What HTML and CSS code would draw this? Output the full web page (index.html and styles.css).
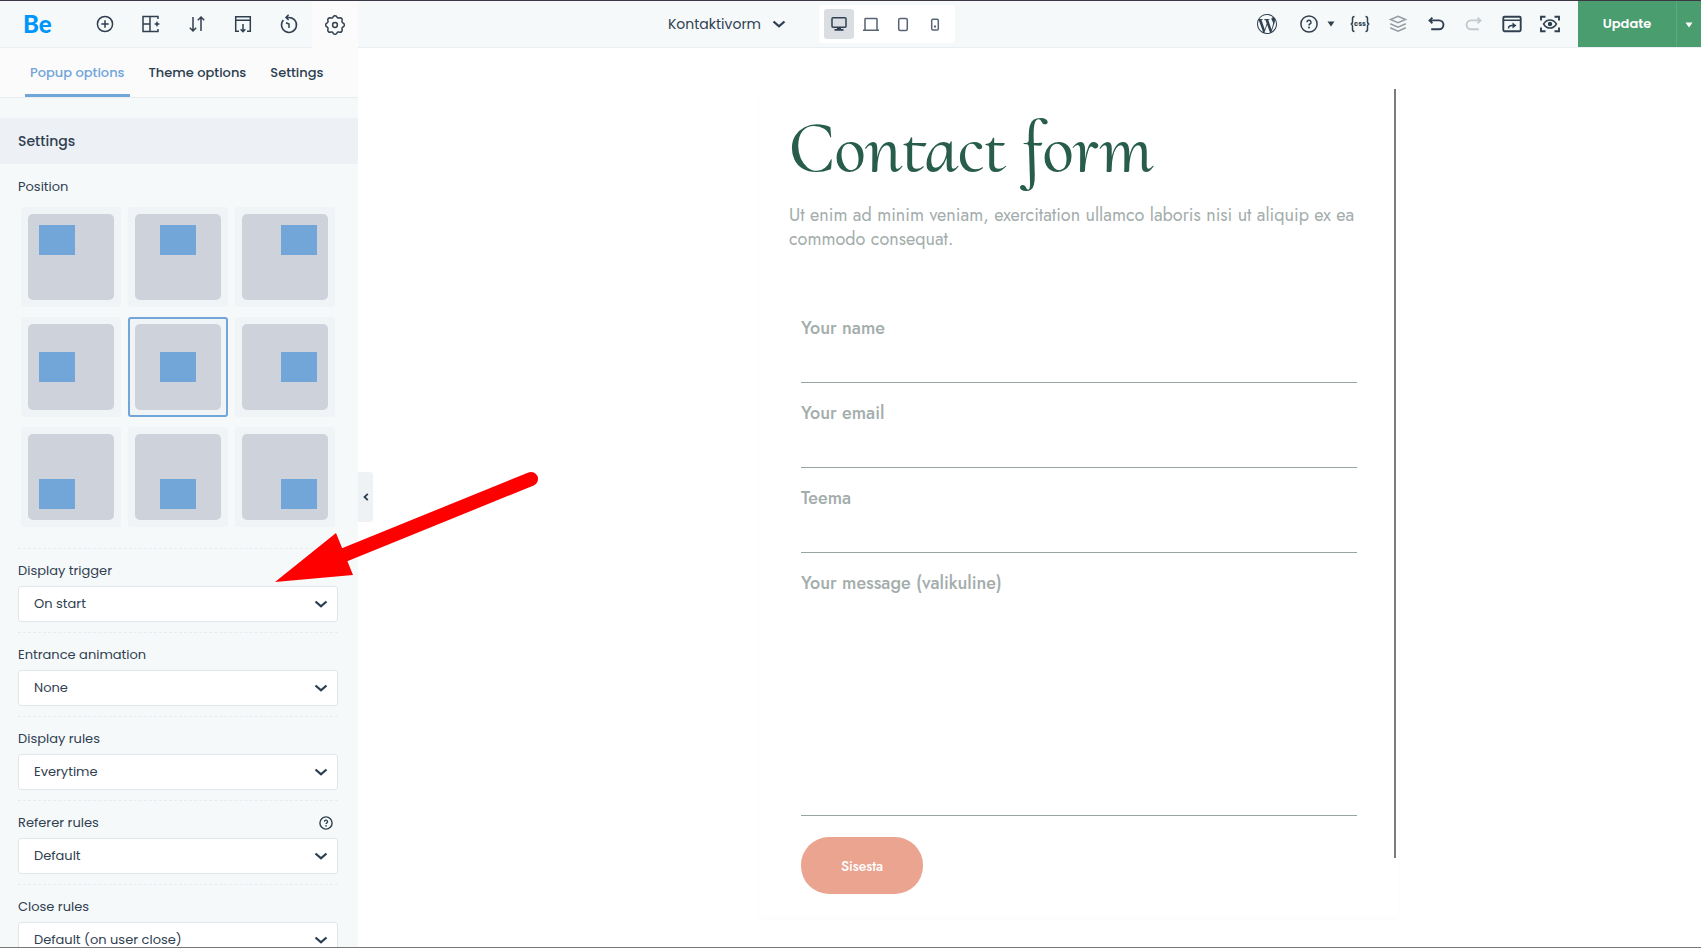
FILE: index.html
```html
<!DOCTYPE html>
<html lang="et">
<head>
    <meta charset="UTF-8">
    <meta name="viewport" content="width=device-width, initial-scale=1.0">
    <title>Kontaktivorm</title>
    <link rel="stylesheet" href="styles.css">
</head>
<body>
    <header class="topbar">
        <div class="topbar-left">
            <a class="logo" href="#">Be</a>
            <button class="tool" type="button" aria-label="Add element">
                <svg class="icon" viewBox="0 0 20 20"><circle cx="10" cy="10" r="7.6"/><path d="M10 6.3v7.4M6.3 10h7.4"/></svg>
            </button>
            <button class="tool" type="button" aria-label="Pre-built sections">
                <svg class="icon" viewBox="0 0 20 20"><path d="M17 5V2.5H2v15h15V15M9 2.5v15M2 10h7"/><path class="solid" d="M16 6.8l.9 2.3 2.3.9-2.3.9-.9 2.3-.9-2.3-2.3-.9 2.3-.9z"/></svg>
            </button>
            <button class="tool" type="button" aria-label="Import and export">
                <svg class="icon" viewBox="0 0 20 20"><path d="M6 3v14M2.8 13.8 6 17l3.200-3.200M14 17V3M10.800 6.200 14 3l3.200 3.200"/></svg>
            </button>
            <button class="tool" type="button" aria-label="Single page import">
                <svg class="icon" viewBox="0 0 20 20"><path d="M6 17.300H2.700V2.700h14.600v14.600H14M2.700 6.300h14.600M10 10v7.500M7.600 15.300 10 17.700l2.400-2.400"/></svg>
            </button>
            <button class="tool" type="button" aria-label="History">
                <svg class="icon" viewBox="0 0 20 20"><path d="M4.400 5.900A7.500 7.500 0 1 0 10 3.400H7.200M9.600 .8 7 3.400 9.600 6M7 8.800l3 1.200v4"/></svg>
            </button>
            <button class="tool tool-active" type="button" aria-label="Settings">
                <svg class="icon" viewBox="0 0 20 20"><circle cx="10" cy="10" r="2.400"/><path d="M18.410 8.210a2.200 2.200 0 0 1 0 3.580a1.900 1.900 0 0 0-1.200 2.890a2.200 2.200 0 0 1-2.530 2.530a1.900 1.900 0 0 0-2.890 1.200a2.200 2.200 0 0 1-3.580 0a1.900 1.900 0 0 0-2.890-1.200a2.200 2.200 0 0 1-2.530-2.530a1.900 1.900 0 0 0-1.200-2.890a2.200 2.200 0 0 1 0-3.580a1.900 1.900 0 0 0 1.200-2.890a2.200 2.200 0 0 1 2.530-2.530a1.900 1.900 0 0 0 2.890-1.200a2.200 2.200 0 0 1 3.580 0a1.900 1.900 0 0 0 2.890 1.200a2.200 2.200 0 0 1 2.530 2.530a1.900 1.900 0 0 0 1.200 2.890z"/></svg>
            </button>
        </div>

        <div class="topbar-center">
            <button class="page-name" type="button">
                Kontaktivorm
                <svg class="chevron" viewBox="0 0 14 8"><path d="M1.500 1.500 7 6.300l5.500-4.800"/></svg>
            </button>
            <div class="devices">
                <button class="device device-active" type="button" aria-label="Desktop">
                    <svg class="icon" viewBox="0 0 20 20"><rect x="3" y="3.800" width="14" height="9.400" rx="1"/><path class="solid" d="M8 13h4v2h2.500v1.800h-9V15H8z"/></svg>
                </button>
                <button class="device" type="button" aria-label="Laptop">
                    <svg class="icon" viewBox="0 0 20 20"><path d="M4 16V5.200q0-.7.7-.7h10.600q.7 0 .7.700V16M2 16.300h16"/></svg>
                </button>
                <button class="device" type="button" aria-label="Tablet">
                    <svg class="icon" viewBox="0 0 20 20"><rect x="5.700" y="4.500" width="8.600" height="12" rx="1.500"/></svg>
                </button>
                <button class="device" type="button" aria-label="Mobile">
                    <svg class="icon" viewBox="0 0 20 20"><rect x="6.700" y="5.200" width="6.600" height="10.800" rx="1.300"/><path class="solid" d="M9 11.500h2v2H9z"/></svg>
                </button>
            </div>
        </div>

        <div class="topbar-right">
            <button class="action" type="button" aria-label="WordPress">
                <svg class="icon" viewBox="0 0 24 24"><path class="solid" d="M21.469 6.825c.84 1.537 1.318 3.300 1.318 5.175 0 3.979-2.156 7.456-5.363 9.325l3.295-9.527c.615-1.540.820-2.771.820-3.864 0-.405-.026-.780-.070-1.110m-7.981.105c.647-.030 1.232-.105 1.232-.105.582-.075.514-.930-.067-.899 0 0-1.755.135-2.880.135-1.064 0-2.850-.150-2.850-.150-.585-.030-.661.855-.075.885 0 0 .540.061 1.125.090l1.680 4.605-2.370 7.080L5.354 6.900c.649-.030 1.234-.100 1.234-.100.585-.075.516-.930-.065-.896 0 0-1.746.138-2.874.138-.200 0-.438-.008-.690-.015C4.911 3.150 8.235 1.215 12 1.215c2.809 0 5.365 1.072 7.286 2.833-.046-.003-.091-.009-.141-.009-1.060 0-1.812.923-1.812 1.914 0 .890.513 1.643 1.060 2.531.411.720.890 1.643.890 2.977 0 .915-.354 1.994-.821 3.479l-1.075 3.585-3.900-11.610.001.014zM12 22.784c-1.059 0-2.081-.153-3.048-.437l3.237-9.406 3.315 9.087c.024.053.050.101.078.149-1.120.393-2.325.609-3.582.609M1.211 12c0-1.564.336-3.050.935-4.390L7.290 21.709C3.694 19.960 1.212 16.271 1.211 12M12 0C5.385 0 0 5.385 0 12s5.385 12 12 12 12-5.385 12-12S18.615 0 12 0"/></svg>
            </button>
            <button class="action action-help" type="button" aria-label="Help">
                <svg class="icon" viewBox="0 0 20 20"><circle cx="10" cy="10" r="8.100"/><path d="M8 8.200a2 2 0 1 1 2.900 1.800q-.9.400-.9 1.400"/><circle class="solid" cx="10" cy="13.600" r="1"/></svg>
                <svg class="caret" viewBox="0 0 8 6"><path d="M.5.500h7L4 5.500z"/></svg>
            </button>
            <button class="action" type="button" aria-label="Custom CSS">
                <svg class="icon" viewBox="0 0 20 20"><path d="M4.500 2.500q-2 0-2 2v3.300Q2.500 10 .7 10q1.800 0 1.800 2.200v3.300q0 2 2 2M15.500 2.500q2 0 2 2v3.300q0 2.200 1.800 2.200-1.800 0-1.800 2.200v3.300q0 2-2 2"/><text class="icon-text" x="10" y="12" text-anchor="middle">css</text></svg>
            </button>
            <button class="action action-soft" type="button" aria-label="Layers">
                <svg class="icon" viewBox="0 0 20 20"><path d="M10 2.200 17.500 5.500 10 8.800 2.500 5.500zM2.200 9.700 10 13.200l7.800-3.500M2.200 13.700 10 17.200l7.800-3.500"/></svg>
            </button>
            <button class="action" type="button" aria-label="Undo">
                <svg class="icon" viewBox="0 0 20 20"><path class="bold" d="M3.500 6.400H13a4.400 4.400 0 0 1 0 8.900H5.200M6.400 3.600 3.500 6.400l2.900 2.800"/></svg>
            </button>
            <button class="action action-disabled" type="button" aria-label="Redo">
                <svg class="icon" viewBox="0 0 20 20"><path class="bold" d="M16.500 6.400H7a4.400 4.400 0 0 0 0 8.900h7.800M13.600 3.600l2.900 2.800-2.900 2.800"/></svg>
            </button>
            <button class="action" type="button" aria-label="Open in new window">
                <svg class="icon" viewBox="0 0 20 20"><rect class="bold" x="1.300" y="2.700" width="17.400" height="14.600" rx="1.200"/><path d="M1.500 6.200h17M6.500 14.500q0-3 3.500-3h1"/><path class="solid" d="M10.500 8.500l4 3-4 3z"/></svg>
            </button>
            <button class="action" type="button" aria-label="Preview">
                <svg class="icon" viewBox="0 0 20 20"><path class="bold" d="M1 6.500V2.800h4.500M14.500 2.800H19v3.700M19 13.500v3.700h-4.500M5.500 17.200H1v-3.700"/><path d="M3.600 10Q6 5.900 10 5.900t6.400 4.100Q14 14.100 10 14.100T3.600 10z"/><circle class="solid" cx="10" cy="10" r="2.200"/></svg>
            </button>
            <button class="update" type="button">Update</button>
            <button class="update-more" type="button" aria-label="More update options">
                <svg class="caret" viewBox="0 0 8 6"><path d="M.5.500h7L4 5.500z"/></svg>
            </button>
        </div>
    </header>

    <main class="workspace">
        <aside class="sidebar">
            <nav class="tabs">
                <a class="tab tab-active" href="#popup">Popup options</a>
                <a class="tab" href="#theme">Theme options</a>
                <a class="tab" href="#settings">Settings</a>
            </nav>
            <h2 class="section-title">Settings</h2>

            <fieldset class="position">
                <legend class="position-title">Position</legend>
                <div class="position-grid">
                    <label class="tile top left"><input type="radio" name="position" aria-label="Top left"><span class="tile-screen"><span class="tile-popup"></span></span></label>
                    <label class="tile top"><input type="radio" name="position" aria-label="Top center"><span class="tile-screen"><span class="tile-popup"></span></span></label>
                    <label class="tile top right"><input type="radio" name="position" aria-label="Top right"><span class="tile-screen"><span class="tile-popup"></span></span></label>
                    <label class="tile left"><input type="radio" name="position" aria-label="Center left"><span class="tile-screen"><span class="tile-popup"></span></span></label>
                    <label class="tile"><input type="radio" name="position" aria-label="Center" checked><span class="tile-screen"><span class="tile-popup"></span></span></label>
                    <label class="tile right"><input type="radio" name="position" aria-label="Center right"><span class="tile-screen"><span class="tile-popup"></span></span></label>
                    <label class="tile bottom left"><input type="radio" name="position" aria-label="Bottom left"><span class="tile-screen"><span class="tile-popup"></span></span></label>
                    <label class="tile bottom"><input type="radio" name="position" aria-label="Bottom center"><span class="tile-screen"><span class="tile-popup"></span></span></label>
                    <label class="tile bottom right"><input type="radio" name="position" aria-label="Bottom right"><span class="tile-screen"><span class="tile-popup"></span></span></label>
                </div>
            </fieldset>

            <div class="option">
                <div class="option-head"><label for="trigger">Display trigger</label></div>
                <div class="select-box">
                    <select id="trigger"><option>On start</option></select>
                    <svg class="chevron" viewBox="0 0 14 8"><path d="M1.500 1.500 7 6.300l5.500-4.800"/></svg>
                </div>
            </div>
            <div class="option">
                <div class="option-head"><label for="animation">Entrance animation</label></div>
                <div class="select-box">
                    <select id="animation"><option>None</option></select>
                    <svg class="chevron" viewBox="0 0 14 8"><path d="M1.500 1.500 7 6.300l5.500-4.800"/></svg>
                </div>
            </div>
            <div class="option">
                <div class="option-head"><label for="rules">Display rules</label></div>
                <div class="select-box">
                    <select id="rules"><option>Everytime</option></select>
                    <svg class="chevron" viewBox="0 0 14 8"><path d="M1.500 1.500 7 6.300l5.500-4.800"/></svg>
                </div>
            </div>
            <div class="option">
                <div class="option-head">
                    <label for="referer">Referer rules</label>
                    <button class="hint" type="button" aria-label="About referer rules">
                        <svg class="icon" viewBox="0 0 20 20"><circle cx="10" cy="10" r="8.700"/><path d="M7.800 8.200a2.200 2.200 0 1 1 3.200 1.900q-1 .4-1 1.400"/><circle class="solid" cx="10" cy="14" r="1.200"/></svg>
                    </button>
                </div>
                <div class="select-box">
                    <select id="referer"><option>Default</option></select>
                    <svg class="chevron" viewBox="0 0 14 8"><path d="M1.500 1.500 7 6.300l5.500-4.800"/></svg>
                </div>
            </div>
            <div class="option">
                <div class="option-head"><label for="close">Close rules</label></div>
                <div class="select-box">
                    <select id="close"><option>Default (on user close)</option></select>
                    <svg class="chevron" viewBox="0 0 14 8"><path d="M1.500 1.500 7 6.300l5.500-4.800"/></svg>
                </div>
            </div>
        </aside>

        <section class="canvas">
            <button class="collapse" type="button" aria-label="Hide sidebar">
                <svg class="collapse-icon" viewBox="0 0 6 8"><path d="M4.800 .8 1.500 4l3.300 3.200"/></svg>
            </button>
            <div class="popup">
                <h1 class="popup-title">Contact form</h1>
                <p class="popup-text">Ut enim ad minim veniam, exercitation ullamco laboris nisi ut aliquip ex ea commodo consequat.</p>
                <form class="contact">
                    <div class="field">
                        <label for="name">Your name</label>
                        <input id="name" type="text">
                    </div>
                    <div class="field">
                        <label for="email">Your email</label>
                        <input id="email" type="email">
                    </div>
                    <div class="field">
                        <label for="subject">Teema</label>
                        <input id="subject" type="text">
                    </div>
                    <div class="field">
                        <label for="message">Your message (valikuline)</label>
                        <textarea id="message"></textarea>
                    </div>
                    <button class="submit" type="submit">Sisesta</button>
                </form>
                <div class="popup-scroll"></div>
            </div>
        </section>
    </main>

    <!-- Red arrow pointing at the display trigger -->
    <svg class="arrow" viewBox="0 0 270 110">
        <path class="arrow-line" d="M256 8 69 84"/>
        <path class="arrow-head" d="M0 111 61 62 78 104z"/>
    </svg>
</body>
</html>
```
FILE: styles.css
```css
* {
    box-sizing: border-box;
}

body {
    margin: 0;
    height: 100vh;
    display: flex;
    flex-direction: column;
    overflow: hidden;
    position: relative;
    border-top: 1px solid #3b3743;
    border-bottom: 1px solid #777777;
    background-color: #ffffff;
    color: #304050;
    font-family: Poppins, Inter, sans-serif;
    font-size: 13px;
}

button {
    margin: 0;
    padding: 0;
    border: none;
    background: none;
    color: inherit;
    font-family: inherit;
    cursor: pointer;
}

a {
    color: inherit;
    text-decoration: none;
}

/* Icons */
.icon {
    width: 20px;
    height: 20px;
    flex: none;
    overflow: visible;
    fill: none;
    stroke: currentColor;
    stroke-width: 1.5;
}

.icon .solid {
    fill: currentColor;
    stroke: none;
}

.icon .bold {
    stroke-width: 1.9;
}

.icon-text {
    fill: currentColor;
    stroke: none;
    font-size: 7px;
    font-weight: 700;
}

.chevron {
    width: 14px;
    height: 8px;
    fill: none;
    stroke: #2c3e50;
    stroke-width: 2.3;
}

.caret {
    width: 8px;
    height: 6px;
    fill: currentColor;
}

/* Top bar */
.topbar {
    flex: none;
    display: flex;
    height: 47px;
    background-color: #f5f9fa;
    border-bottom: 1px solid #e9eef2;
}

.topbar-left {
    flex: none;
    width: 358px;
    display: flex;
}

.logo {
    flex: 1;
    padding-left: 23px;
    line-height: 46px;
    font-family: Lato, sans-serif;
    font-size: 24px;
    font-weight: 900;
    color: #0095f8;
}

.tool {
    width: 46px;
    display: flex;
    align-items: center;
    justify-content: center;
}

.tool-active {
    height: 47px;
    background-color: #fbfbfb;
}

.topbar-center {
    flex: 1;
    display: flex;
    align-items: center;
    justify-content: center;
    gap: 33px;
    padding-left: 17px;
}

.page-name {
    display: flex;
    align-items: center;
    gap: 11px;
    font-size: 14px;
}

.devices {
    display: flex;
    gap: 2px;
    padding: 4px 5px;
    border-radius: 4px;
    background-color: #ffffff;
}

.device {
    width: 30px;
    height: 30px;
    display: flex;
    align-items: center;
    justify-content: center;
    border-radius: 3px;
    color: #566473;
}

.device-active {
    background-color: #dadee3;
    color: #304050;
}

.topbar-right {
    flex: none;
    display: flex;
}

.action {
    width: 38px;
    display: flex;
    align-items: center;
    justify-content: center;
}

.action-help {
    width: 55px;
    gap: 8px;
    padding-left: 6px;
}

.action-soft {
    color: #939ca5;
}

.action-disabled {
    color: #c3c9ce;
}

.update {
    width: 98px;
    margin-left: 9px;
    background-color: #4a9d6e;
    color: #ffffff;
    font-size: 13px;
    font-weight: 600;
}

.update-more {
    width: 25px;
    border-left: 1px solid #5ca97d;
    background-color: #4a9d6e;
    color: #ffffff;
}

.workspace {
    flex: 1;
    min-height: 0;
    display: flex;
}

/* Sidebar */
.sidebar {
    flex: none;
    width: 358px;
    overflow: hidden;
    background-color: #f5f9fa;
}

.tabs {
    display: flex;
    gap: 14px;
    height: 50px;
    padding: 0 25px;
    background-color: #fbfbfb;
    border-bottom: 1px solid #e9edf0;
}

.tab {
    padding: 0 5px;
    line-height: 50px;
    font-weight: 500;
    white-space: nowrap;
    color: #2c3e50;
}

.tab-active {
    border-bottom: 3px solid #72a5d8;
    color: #72a5d8;
}

.section-title {
    margin: 20px 0 0;
    padding: 0 18px;
    background-color: #edf1f5;
    line-height: 46px;
    font-size: 14px;
    font-weight: 500;
}

.position {
    margin: 0;
    padding: 13px 18px 21px;
    border: none;
}

.position-title {
    float: left;
    width: 100%;
    margin-bottom: 10px;
    padding: 0;
    line-height: 20px;
}

.position-grid {
    clear: both;
    display: grid;
    grid-template-columns: repeat(3, 100px);
    gap: 10px 7px;
    padding-left: 3px;
}

.tile {
    position: relative;
    padding: 7px;
    border-radius: 3px;
    background-color: #f0f4f7;
}

.tile input {
    position: absolute;
    opacity: 0;
}

.tile:has(input:checked) {
    box-shadow: inset 0 0 0 2px #72a5d8;
}

.tile-screen {
    display: flex;
    align-items: center;
    justify-content: center;
    height: 86px;
    padding: 11px;
    border-radius: 5px;
    background-color: #ced2da;
}

.tile-popup {
    width: 36px;
    height: 30px;
    background-color: #72a5d8;
}

.top .tile-screen {
    align-items: flex-start;
}

.bottom .tile-screen {
    align-items: flex-end;
}

.left .tile-screen {
    justify-content: flex-start;
}

.right .tile-screen {
    justify-content: flex-end;
}

.option {
    margin: 0 20px 0 18px;
    padding: 12px 0 10px;
    border-top: 1px dashed #e6ecf3;
}

.option-head {
    display: flex;
    align-items: center;
    justify-content: space-between;
    height: 20px;
    margin-bottom: 5px;
    padding-right: 5px;
}

.hint {
    display: flex;
}

.hint .icon {
    width: 14px;
    height: 14px;
    stroke-width: 2;
}

.select-box {
    position: relative;
}

.select-box select {
    display: block;
    width: 100%;
    height: 36px;
    padding: 0 36px 1px 15px;
    border: 1px solid #e1e6eb;
    border-radius: 3px;
    background-color: #ffffff;
    color: #304050;
    font-family: inherit;
    font-size: 13px;
    appearance: none;
}

.select-box .chevron {
    position: absolute;
    top: 14px;
    right: 10px;
    pointer-events: none;
}

/* Canvas */
.canvas {
    flex: 1;
    position: relative;
    display: flex;
    align-items: flex-start;
    justify-content: center;
    padding: 41px 0 0 99px;
}

.collapse {
    position: absolute;
    top: 424px;
    left: 0;
    width: 15px;
    height: 50px;
    border-radius: 0 3px 3px 0;
    background-color: #eef2f5;
}

.collapse-icon {
    width: 6px;
    height: 8px;
    fill: none;
    stroke: #2c3e50;
    stroke-width: 1.8;
}

.popup {
    position: relative;
    width: 640px;
    padding: 19px 30px 23px;
    box-shadow: 0 2px 4px rgba(0, 0, 0, 0.02);
    color: #a3adab;
    font-family: Jost, Lato, sans-serif;
    font-size: 18px;
    line-height: 24px;
}

.popup-title {
    margin: 0;
    color: #285c4d;
    font-family: "Cormorant Upright", "Liberation Serif", serif;
    font-size: 72px;
    font-weight: 500;
    line-height: 80px;
}

.popup-text {
    margin: 15px 0 65px;
}

.contact {
    display: flex;
    flex-direction: column;
    gap: 18px;
    padding: 0 12px;
}

.field {
    display: flex;
    flex-direction: column;
    font-weight: 500;
}

.field input,
.field textarea {
    height: 43px;
    padding: 0;
    border: none;
    border-bottom: 1px solid #98a4a2;
    border-radius: 0;
    background: none;
    font: inherit;
    resize: none;
}

.field textarea {
    height: 221px;
}

.submit {
    align-self: flex-start;
    width: 122px;
    height: 57px;
    margin-top: 3px;
    border-radius: 28px;
    background-color: #eaa490;
    color: #ffffff;
    font-size: 14px;
    font-weight: 500;
}

.popup-scroll {
    position: absolute;
    top: 0;
    right: 3px;
    bottom: 59px;
    width: 2px;
    background-color: #7c7c7c;
}

.arrow {
    position: absolute;
    top: 470px;
    left: 275px;
    width: 270px;
    height: 110px;
    overflow: visible;
    pointer-events: none;
}

.arrow-line {
    fill: none;
    stroke: #ff0000;
    stroke-width: 14;
    stroke-linecap: round;
}

.arrow-head {
    fill: #ff0000;
}
```
